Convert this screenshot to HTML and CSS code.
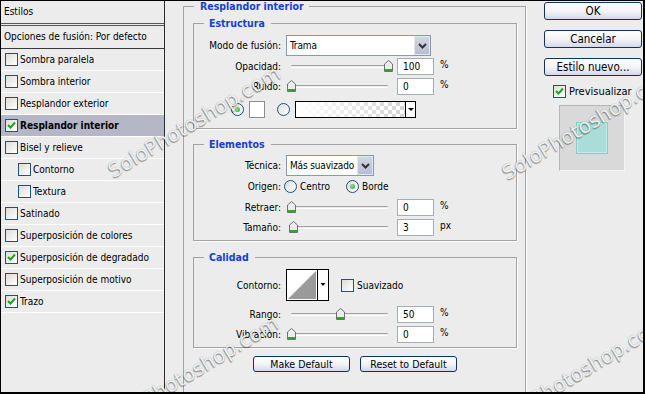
FILE: index.html
```html
<!DOCTYPE html>
<html>
  <head>
    <link rel="stylesheet" href="styles.css">
  </head>
  <body>
    <div class="dialog">

      <!-- Lista de estilos de capa -->
      <div class="styles-list">
        <div class="list-head">Estilos</div>
        <div class="list-blend">Opciones de fusión: Por defecto</div>
        <div class="list-row"><span class="check"></span>Sombra paralela</div>
        <div class="list-row"><span class="check"></span>Sombra interior</div>
        <div class="list-row"><span class="check"></span>Resplandor exterior</div>
        <div class="list-row selected"><span class="check on"><svg width="11" height="11" viewBox="0 0 11 11"><polyline points="2,5 4.5,7.5 9,2.5" fill="none" stroke="#21a121" stroke-width="2"/></svg></span>Resplandor interior</div>
        <div class="list-row"><span class="check"></span>Bisel y relieve</div>
        <div class="list-row sub"><span class="check"></span>Contorno</div>
        <div class="list-row sub"><span class="check"></span>Textura</div>
        <div class="list-row"><span class="check"></span>Satinado</div>
        <div class="list-row"><span class="check"></span>Superposición de colores</div>
        <div class="list-row"><span class="check on"><svg width="11" height="11" viewBox="0 0 11 11"><polyline points="2,5 4.5,7.5 9,2.5" fill="none" stroke="#21a121" stroke-width="2"/></svg></span>Superposición de degradado</div>
        <div class="list-row"><span class="check"></span>Superposición de motivo</div>
        <div class="list-row"><span class="check on"><svg width="11" height="11" viewBox="0 0 11 11"><polyline points="2,5 4.5,7.5 9,2.5" fill="none" stroke="#21a121" stroke-width="2"/></svg></span>Trazo</div>
      </div>

      <!-- Panel principal -->
      <div class="main">
        <fieldset class="group-outer">
          <legend>Resplandor interior</legend>

          <fieldset class="group group-structure">
            <legend>Estructura</legend>
            <div class="row row-select">
              <span class="label">Modo de fusión:</span>
              <div class="select select-wide">
                <span class="select-value">Trama</span>
                <span class="select-arrow"><svg width="9" height="6" viewBox="0 0 9 6"><polyline points="1,1 4.5,4.5 8,1" fill="none" stroke="#333" stroke-width="2"/></svg></span>
              </div>
            </div>
            <div class="row">
              <span class="label">Opacidad:</span>
              <div class="slider"><svg class="thumb" style="left: 100%" width="9" height="12" viewBox="0 0 9 12"><path d="M4.5 0.5 L8.5 4 V11.5 H0.5 V4 Z" fill="#ececec" stroke="#707070"/><rect x="1" y="9" width="7" height="2" fill="#2ea82e"/></svg></div>
              <span class="num">100</span>
              <span class="unit">%</span>
            </div>
            <div class="row">
              <span class="label">Ruido:</span>
              <div class="slider"><svg class="thumb" style="left: 0%" width="9" height="12" viewBox="0 0 9 12"><path d="M4.5 0.5 L8.5 4 V11.5 H0.5 V4 Z" fill="#ececec" stroke="#707070"/><rect x="1" y="9" width="7" height="2" fill="#2ea82e"/></svg></div>
              <span class="num">0</span>
              <span class="unit">%</span>
            </div>
            <div class="row row-fill">
              <span class="radio on"></span>
              <span class="swatch"></span>
              <span class="radio"></span>
              <div class="gradient">
                <span class="gradient-fill"></span>
                <span class="drop"></span>
              </div>
            </div>
          </fieldset>

          <fieldset class="group group-elements">
            <legend>Elementos</legend>
            <div class="row row-select">
              <span class="label">Técnica:</span>
              <div class="select select-short">
                <span class="select-value">Más suavizado</span>
                <span class="select-arrow"><svg width="9" height="6" viewBox="0 0 9 6"><polyline points="1,1 4.5,4.5 8,1" fill="none" stroke="#333" stroke-width="2"/></svg></span>
              </div>
            </div>
            <div class="row row-origin">
              <span class="label">Origen:</span>
              <span class="option option-first"><span class="radio"></span>Centro</span>
              <span class="option"><span class="radio on"></span>Borde</span>
            </div>
            <div class="row">
              <span class="label">Retraer:</span>
              <div class="slider"><svg class="thumb" style="left: 0%" width="9" height="12" viewBox="0 0 9 12"><path d="M4.5 0.5 L8.5 4 V11.5 H0.5 V4 Z" fill="#ececec" stroke="#707070"/><rect x="1" y="9" width="7" height="2" fill="#2ea82e"/></svg></div>
              <span class="num">0</span>
              <span class="unit">%</span>
            </div>
            <div class="row">
              <span class="label">Tamaño:</span>
              <div class="slider"><svg class="thumb" style="left: 2%" width="9" height="12" viewBox="0 0 9 12"><path d="M4.5 0.5 L8.5 4 V11.5 H0.5 V4 Z" fill="#ececec" stroke="#707070"/><rect x="1" y="9" width="7" height="2" fill="#2ea82e"/></svg></div>
              <span class="num">3</span>
              <span class="unit">px</span>
            </div>
          </fieldset>

          <fieldset class="group group-quality">
            <legend>Calidad</legend>
            <div class="row row-contour">
              <span class="label">Contorno:</span>
              <svg class="contour" width="43" height="32" viewBox="0 0 43 32">
                <rect x="0.5" y="0.5" width="42" height="31" fill="#fff" stroke="#000"/>
                <polygon points="2,30 30,2 30,30" fill="#9a9a9a"/>
                <line x1="31.5" y1="0" x2="31.5" y2="32" stroke="#000"/>
                <polygon points="34.5,14 39.5,14 37,17" fill="#000"/>
              </svg>
              <span class="option option-check"><span class="check"></span>Suavizado</span>
            </div>
            <div class="row">
              <span class="label">Rango:</span>
              <div class="slider"><svg class="thumb" style="left: 50%" width="9" height="12" viewBox="0 0 9 12"><path d="M4.5 0.5 L8.5 4 V11.5 H0.5 V4 Z" fill="#ececec" stroke="#707070"/><rect x="1" y="9" width="7" height="2" fill="#2ea82e"/></svg></div>
              <span class="num">50</span>
              <span class="unit">%</span>
            </div>
            <div class="row">
              <span class="label">Vibración:</span>
              <div class="slider"><svg class="thumb" style="left: 0%" width="9" height="12" viewBox="0 0 9 12"><path d="M4.5 0.5 L8.5 4 V11.5 H0.5 V4 Z" fill="#ececec" stroke="#707070"/><rect x="1" y="9" width="7" height="2" fill="#2ea82e"/></svg></div>
              <span class="num">0</span>
              <span class="unit">%</span>
            </div>
          </fieldset>

          <div class="default-buttons">
            <button class="btn btn-small">Make Default</button>
            <button class="btn btn-small">Reset to Default</button>
          </div>
        </fieldset>
      </div>

      <!-- Botones de la derecha -->
      <div class="side">
        <button class="btn btn-side">OK</button>
        <button class="btn btn-side">Cancelar</button>
        <button class="btn btn-side">Estilo nuevo...</button>
        <div class="preview-toggle"><span class="check on"><svg width="11" height="11" viewBox="0 0 11 11"><polyline points="2,5 4.5,7.5 9,2.5" fill="none" stroke="#21a121" stroke-width="2"/></svg></span>Previsualizar</div>
        <div class="preview"><div class="preview-square"></div></div>
      </div>

      <!-- Marcas de agua encima de todo -->
      <span class="watermark wm-1">SoloPhotoshop.com</span>
      <span class="watermark wm-2">SoloPhotoshop.com</span>
      <span class="watermark wm-3">SoloPhotoshop.com</span>
      <span class="watermark wm-4">SoloPhotoshop.com</span>
    </div>
  </body>
</html>
```

FILE: styles.css
```css
body {
  margin: 0;
  background: #ececec;
}

/* Marco del dialogo */
.dialog {
  position: relative;
  display: flex;
  width: 645px;
  height: 394px;
  box-sizing: border-box;
  border-top: 1px solid #000;
  border-left: 1px solid #000;
  border-right: 2px solid #000;
  border-bottom: 2px solid #000;
  padding-right: 1px;
  background: #ececec;
  overflow: hidden;
  font-family: "DejaVu Sans Condensed", "Liberation Sans", sans-serif;
  font-size: 10px;
  color: #000;
}

/* Lista de la izquierda */
.styles-list {
  width: 164px;
  flex-shrink: 0;
  box-sizing: border-box;
  border-right: 1px solid #2b2b2b;
}

.list-head {
  height: 22px;
  line-height: 22px;
  padding-left: 3px;
  border-bottom: 3px double #5a5a5a;
}

.list-blend {
  height: 22px;
  line-height: 22px;
  padding-left: 3px;
  border-bottom: 1px solid #3a3a3a;
}

.list-row {
  display: flex;
  align-items: center;
  gap: 2px;
  height: 21px;
  padding-left: 4px;
  border-bottom: 1px solid #fff;
}

.list-row.sub {
  padding-left: 17px;
}

.list-row.selected {
  background: #b5b6c6;
  font-weight: bold;
}

/* Casilla estilo XP */
.check {
  display: inline-flex;
  align-items: center;
  justify-content: center;
  width: 13px;
  height: 13px;
  box-sizing: border-box;
  border: 1px solid #1c5180;
  background: linear-gradient(135deg, #dcdcd7, #fff);
  flex-shrink: 0;
}

.radio {
  position: relative;
  display: inline-block;
  width: 13px;
  height: 13px;
  box-sizing: border-box;
  border: 1px solid #1c5180;
  border-radius: 50%;
  background: linear-gradient(135deg, #dcdcd7, #fff);
  flex-shrink: 0;
}

.radio.on::after {
  content: "";
  position: absolute;
  left: 3px;
  top: 3px;
  width: 5px;
  height: 5px;
  border-radius: 50%;
  background: radial-gradient(circle at 40% 40%, #8ee28e, #21a121);
}

/* Panel principal */
.main {
  width: 379px;
  flex-shrink: 0;
  overflow: hidden;
}

fieldset {
  margin: 0;
  min-width: 0;
  border: 1px solid #a3a3a3;
  box-shadow: 1px 1px 0 #fff;
}

legend {
  color: #1441d4;
  font-weight: bold;
  font-size: 10.5px;
}

.group-outer {
  margin-left: 18px;
  width: 343px;
  box-sizing: border-box;
  padding: 5px 8px 40px 9px;
}

.group-outer > legend {
  line-height: 11px;
  margin-left: 1px;
  padding: 0 5px 0 6px;
}

.group {
  padding: 0;
}

.group > legend {
  line-height: 13px;
  margin-left: 10px;
  padding: 0 6px 0 5px;
}

.group-structure {
  padding: 5px 0 10px;
}

.group-elements {
  margin-top: 9px;
  padding: 4px 0 3px;
}

.group-quality {
  margin-top: 10px;
  padding: 5px 0 3px;
}

.row {
  display: flex;
  align-items: center;
  height: 20px;
}

.row-select {
  height: 21px;
}

.row-origin {
  height: 21px;
}

.row-contour {
  height: 32px;
  margin-bottom: 3px;
}

.row-fill {
  height: 17px;
  margin-top: 5px;
  padding-left: 37px;
}

.label {
  width: 88px;
  flex-shrink: 0;
  box-sizing: border-box;
  padding-right: 1px;
  text-align: right;
}

/* Lista desplegable */
.select {
  display: flex;
  height: 21px;
  margin-left: 4px;
  box-sizing: border-box;
  border: 1px solid #7f9db9;
  background: #fff;
}

.select-wide {
  width: 145px;
}

.select-short {
  width: 88px;
}

.select-value {
  flex: 1;
  padding-left: 3px;
  line-height: 19px;
  letter-spacing: -0.15px;
  white-space: nowrap;
  overflow: hidden;
}

.select-arrow {
  display: flex;
  align-items: center;
  justify-content: center;
  width: 14px;
  border: 1px solid #e4e6ef;
  background: linear-gradient(#d2d5e3, #b8bdd2);
}

/* Deslizador */
.slider {
  position: relative;
  width: 97px;
  height: 12px;
  margin-left: 9px;
  margin-right: 9px;
}

.slider::before {
  content: "";
  position: absolute;
  left: 0;
  right: 0;
  top: 5px;
  height: 1px;
  border-top: 1px solid #a2a2a2;
  border-bottom: 1px solid #fff;
  border-radius: 1px;
}

.thumb {
  position: absolute;
  top: 0;
  margin-left: -4px;
}

.num {
  width: 37px;
  height: 17px;
  box-sizing: border-box;
  border: 1px solid #a7adb4;
  background: #fff;
  padding-left: 5px;
  line-height: 15px;
}

.unit {
  margin-left: 6px;
  margin-top: -3px;
}

.swatch {
  width: 16px;
  height: 17px;
  margin-left: 5px;
  margin-right: 12px;
  box-sizing: border-box;
  border: 1px solid #8e8e8e;
  background: #fff;
}

.gradient {
  display: flex;
  width: 121px;
  height: 17px;
  margin-left: 5px;
  box-sizing: border-box;
  border: 1px solid #000;
}

.gradient-fill {
  flex: 1;
  background:
    linear-gradient(to right, #fff 0%, rgba(255, 255, 255, 0) 100%),
    repeating-conic-gradient(#d4d4d4 0 25%, #fff 0 50%) 0 0 / 8px 8px;
}

.drop {
  display: flex;
  align-items: center;
  justify-content: center;
  width: 9px;
  border-left: 1px solid #000;
  background: #fff;
}

.drop::after {
  content: "";
  border-left: 3px solid transparent;
  border-right: 3px solid transparent;
  border-top: 3px solid #000;
}

.option {
  display: flex;
  align-items: center;
  gap: 3px;
}

.option-first {
  width: 62px;
  margin-left: 2px;
}

.contour {
  margin-left: 4px;
  flex-shrink: 0;
}

.option-check {
  margin-left: 12px;
}

/* Botones */
.btn {
  display: flex;
  align-items: center;
  justify-content: center;
  padding: 0;
  box-sizing: border-box;
  border: 1px solid #10306a;
  border-radius: 3px;
  background: linear-gradient(#ffffff 0%, #f4f4f8 50%, #d5d8e6 100%);
  font-family: inherit;
  color: #000;
}

.default-buttons {
  display: flex;
  justify-content: center;
  gap: 10px;
  margin-top: 8px;
}

.btn-small {
  width: 97px;
  height: 16px;
  font-size: 10.5px;
}

.side {
  width: 98px;
  flex-shrink: 0;
  display: flex;
  flex-direction: column;
  padding-top: 1px;
}

.btn-side {
  width: 98px;
  height: 18px;
  font-size: 11.5px;
  margin-bottom: 10px;
}

.preview-toggle {
  display: flex;
  align-items: center;
  gap: 3px;
  margin-top: -1px;
  padding-left: 9px;
  font-size: 11px;
}

.preview {
  display: flex;
  align-items: center;
  justify-content: center;
  width: 66px;
  height: 66px;
  margin-top: 7px;
  margin-left: 15px;
  box-sizing: border-box;
  border: 1px solid;
  border-color: #b5b5b5 #f4f4f4 #f4f4f4 #b5b5b5;
  background: #d9d9d9;
}

.preview-square {
  width: 32px;
  height: 32px;
  box-sizing: border-box;
  border: 1px solid #86cdc7;
  box-shadow: inset 0 0 0 1px #c2ebe6;
  background: #a8ddd8;
}

/* Marcas de agua */
.watermark {
  position: absolute;
  font-family: "DejaVu Sans", sans-serif;
  font-size: 20px;
  line-height: 20px;
  white-space: nowrap;
  color: rgba(255, 255, 255, 0.9);
  text-shadow: -1px 1px 1px rgba(0, 0, 0, 0.35), 0 0 1px rgba(0, 0, 0, 0.4);
  transform-origin: 0 100%;
  transform: rotate(-31deg);
  pointer-events: none;
}

.wm-1 {
  left: 114px;
  top: 160px;
}

.wm-2 {
  left: 508px;
  top: 162px;
}

.wm-3 {
  left: 112px;
  top: 410px;
}

.wm-4 {
  left: 500px;
  top: 410px;
}
```
